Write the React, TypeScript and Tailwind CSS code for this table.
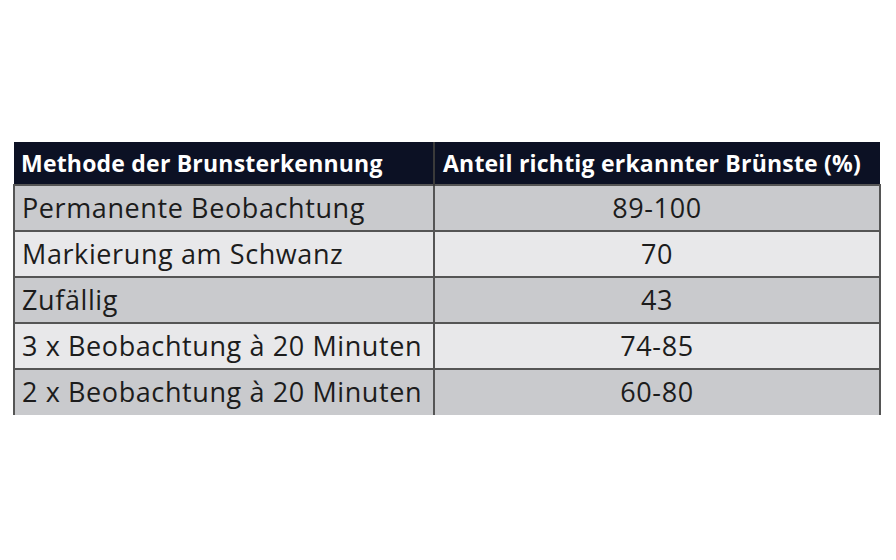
const rows = [
  { method: "Permanente Beobachtung", share: "89-100" },
  { method: "Markierung am Schwanz", share: "70" },
  { method: "Zufällig", share: "43" },
  { method: "3 x Beobachtung à 20 Minuten", share: "74-85" },
  { method: "2 x Beobachtung à 20 Minuten", share: "60-80" },
]

export default function App() {
  return (
    <div className="h-[560px] w-[896px] bg-white pt-[142px] pl-[13px] font-['Open_Sans',sans-serif]">
      <table className="w-[868px] border-collapse">
        <thead>
          <tr className="h-[43px] bg-[#0c1124] text-white">
            <th className="w-[420px] border-r-2 border-[#3a3a3a] pl-[7px] text-left text-[23px] font-bold tracking-[0.2px]">
              Methode der Brunsterkennung
            </th>
            <th className="pl-[8px] text-left text-[23px] font-bold tracking-[0.2px]">
              Anteil richtig erkannter Brünste (%)
            </th>
          </tr>
        </thead>
        <tbody className="text-[#1c1c1c]">
          {rows.map((r, i) => (
            <tr
              key={r.method}
              className={`h-[46px] border-t-2 border-[#555] ${i % 2 === 0 ? "bg-[#c9cacd]" : "bg-[#e8e8ea]"}`}
            >
              <td className="border-x-2 border-[#555] pl-[7px] text-[27px] tracking-[0.6px]">{r.method}</td>
              <td className="border-r-2 border-[#555] text-center text-[27px] tracking-[0.6px]">{r.share}</td>
            </tr>
          ))}
        </tbody>
      </table>
    </div>
  )
}
